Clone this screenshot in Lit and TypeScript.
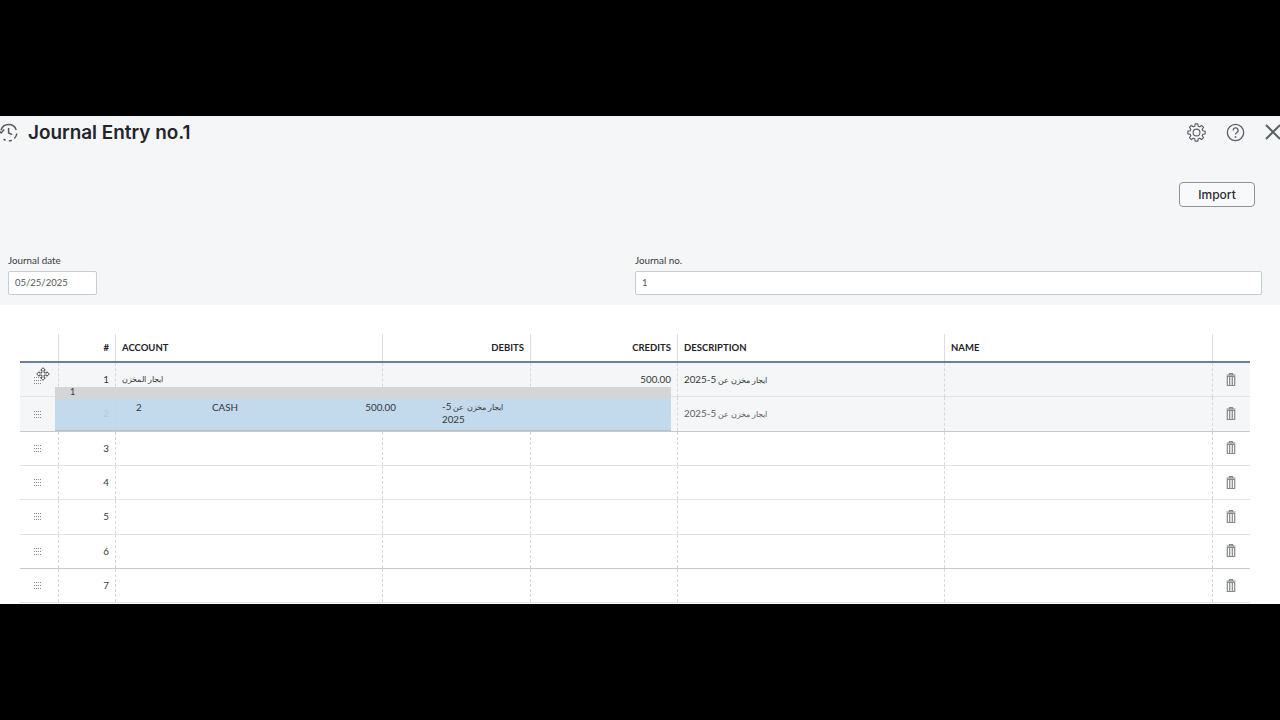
import { LitElement, html, css, svg } from "lit";
import { customElement } from "lit/decorators.js";

const FONT = css`Lato, "Noto Sans", "Liberation Sans", sans-serif`;
const ar = "ايجار مخزن عن ";
const descT = html`<span class="ar">${ar}</span>5-2025`;

const grip = svg`<svg class="grip" viewBox="0 0 8 7" width="8" height="7" shape-rendering="crispEdges" aria-hidden="true">
  ${[0, 2, 4, 6].map((c) => [0, 3, 6].map((r) => svg`<rect x="${c}" y="${r}" width="1" height="1" fill="#85898c"/>`))}
</svg>`;

const trash = html`<svg class="trash" viewBox="0 0 10 13" width="10" height="13" aria-hidden="true">
  <path d="M3.4 1.5V.6h3.2v.9M0.6 2h8.8" fill="none" stroke="#85898c" stroke-width="1.1"/>
  <path d="M1.3 3.4h7.4V12.6H1.3z M3.7 4v8 M6.3 4v8" fill="none" stroke="#85898c" stroke-width="1.2"/>
</svg>`;

function gearPath(): string {
  const pts: string[] = [];
  for (let i = 0; i < 8; i++) {
    const a = i * 45;
    for (const [r, d] of [[6.9, -15], [9.2, -9], [9.2, 9], [6.9, 15]] as const) {
      const t = ((a + d) * Math.PI) / 180;
      pts.push(`${(10 + r * Math.cos(t)).toFixed(2)} ${(10 + r * Math.sin(t)).toFixed(2)}`);
    }
  }
  return "M" + pts.join("L") + "Z";
}

interface Row { n: number; account?: string; credits?: string; desc?: boolean; tint?: boolean; soft?: boolean; }
const rows: Row[] = [
  { n: 1, account: "ايجار المخزن", credits: "500.00", desc: true, tint: true },
  { n: 2, desc: true, tint: true, soft: true },
  { n: 3 }, { n: 4 }, { n: 5 }, { n: 6 }, { n: 7 },
];

@customElement("app-root")
export class AppRoot extends LitElement {
  static styles = css`
    :host { display: block; width: 1280px; height: 720px; background: #000; padding: 116px 0; box-sizing: border-box; overflow: hidden; font-family: ${FONT}; color: #2b2d30; }
    .main { position: relative; height: 488px; background: #fff; overflow: hidden; }
    .head { height: 189px; background: #f4f6f8; display: flex; flex-direction: column; box-sizing: border-box; }
    .top { display: flex; align-items: center; height: 32px; }
    .hist { margin-left: -2px; width: 21px; height: 21px; flex: none; }
    h1 { margin: 0 0 0 9px; font-family: Inter, ${FONT}; font-size: 18.9px; font-weight: 600; color: #22252a; flex: 1; }
    .tools { display: flex; align-items: center; gap: 20px; margin-right: -1px; }
    .tools svg { display: block; flex: none; }
    .importrow { display: flex; justify-content: flex-end; padding-right: 25px; margin-top: 34px; }
    button { width: 76px; height: 25px; border: 1px solid #8f9498; border-radius: 4px; background: #f8f9fa; font: 500 12px Inter, ${FONT}; color: #2b2d30; padding: 0; }
    .fields { display: flex; margin-top: 48px; padding-left: 8px; }
    .field { display: flex; flex-direction: column; gap: 5px; width: 627px; }
    label { font-size: 9.8px; line-height: 11px; color: #393a3d; }
    .input { height: 24px; box-sizing: border-box; background: #fff; border: 1px solid #c9cdd0; border-radius: 2px; font-size: 9.5px; line-height: 22px; padding: 0 6px; color: #55585c; }
    .date .input { width: 89px; }
    .table { margin: 29px 30px 0 20px; width: 1230px; }
    .tr { display: grid; grid-template-columns: 38px 57px 267px 148px 147px 267px 268px 38px; }
    .hr { height: 27px; border-bottom: 2.5px solid #6d7f9b; }
    .hr .c { border-left: 1px solid #dcdee0; font-size: 9.5px; font-weight: 700; line-height: 27px; color: #1f2226; }
    .hr .c:first-child { border-left: 0; }
    .c { box-sizing: border-box; padding: 0 6px; min-width: 0; }
    .right { text-align: right; }
    .br { height: 34.33px; box-sizing: border-box; border-bottom: 1px solid #e1e3e5; }
    .br.tint { background: #f4f6f8; }
    .br.last { border-bottom-color: #c7cacc; }
    .br .c { border-left: 1px dashed #d6d8da; font-size: 9.8px; line-height: 33px; color: #33363a; white-space: nowrap; }
    .br .c:first-child { border-left: 0; }
    .br .c.g, .br .c.t { display: flex; align-items: center; justify-content: center; padding: 0; }
    .br .c.g { padding-right: 2px; }
    .br .c.t { padding: 0 1px 1px 0; }
    .br .c.acct { font-size: 8.1px; }
    .grip { display: block; }
    .ar { font-size: 8.3px; }
    .soft { color: #5c6064 !important; }
    .ghost { position: absolute; left: 55px; top: 271px; width: 616px; height: 44px; font-size: 9.8px; color: #34383c; overflow: hidden; border-bottom: 1px solid #b8c3cc; box-sizing: border-box; }
    .g1 { height: 12px; background: #d3d5d7; padding-left: 15px; line-height: 10px; font-size: 9px; }
    .g2 { height: 31px; background: rgba(190, 214, 234, 0.92); display: grid; grid-template-columns: 76px 92px 92px 1fr; line-height: 15px; padding: 1px 0 0 81px; box-sizing: border-box; }
    .g2 .a { text-align: right; }
    .g2 .d { width: 66px; margin-left: 46px; line-height: 12px; white-space: normal; }
    .cursor { position: absolute; left: 36px; top: 251px; }
  `;

  render() {
    return html`<div class="main">
      <section class="head">
        <div class="top">
          <svg class="hist" viewBox="0 0 21 21" aria-hidden="true">
            <path d="M3 8.2A8 8 0 0 1 18.2 8 M18.8 11.5a8 8 0 0 1-2.4 5 M13.8 18.2a8 8 0 0 1-3 .6 M7.6 18.2a8 8 0 0 1-1.9-1.1" fill="none" stroke="#55585c" stroke-width="1.5"/>
            <path d="M10.6 6v5l3.6 1.6" fill="none" stroke="#55585c" stroke-width="1.5"/>
            <path d="M0 7.6l3.2 3.4 3-3.4" fill="none" stroke="#55585c" stroke-width="1.5"/>
          </svg>
          <h1>Journal Entry no.1</h1>
          <div class="tools">
            <svg viewBox="0 0 20 20" width="19" height="19" aria-hidden="true">
              <path d="${gearPath()}" fill="none" stroke="#5c5f63" stroke-width="1.2" stroke-linejoin="round"/>
              <circle cx="10" cy="10" r="3.6" fill="none" stroke="#5c5f63" stroke-width="1.2"/>
            </svg>
            <svg viewBox="0 0 20 20" width="19" height="19" aria-hidden="true">
              <circle cx="10" cy="10" r="8.6" fill="none" stroke="#5c5f63" stroke-width="1.4"/>
              <path d="M7.5 7.8a2.6 2.6 0 1 1 3.9 2.2c-.9.6-1.4 1-1.4 2.2" fill="none" stroke="#5c5f63" stroke-width="1.4"/>
              <circle cx="10" cy="14.7" r=".95" fill="#5c5f63"/>
            </svg>
            <svg viewBox="0 0 16 16" width="16" height="16" aria-hidden="true">
              <path d="M1 1l14 14M15 1L1 15" fill="none" stroke="#5f6266" stroke-width="2"/>
            </svg>
          </div>
        </div>
        <div class="importrow"><button>Import</button></div>
        <div class="fields">
          <div class="field date"><label>Journal date</label><div class="input">05/25/2025</div></div>
          <div class="field"><label>Journal no.</label><div class="input">1</div></div>
        </div>
      </section>

      <div class="table">
        <div class="tr hr">
          <div class="c"></div>
          <div class="c right">#</div>
          <div class="c">ACCOUNT</div>
          <div class="c right">DEBITS</div>
          <div class="c right">CREDITS</div>
          <div class="c">DESCRIPTION</div>
          <div class="c">NAME</div>
          <div class="c"></div>
        </div>
        ${rows.map((r) => html`<div class="tr br ${r.tint ? "tint" : ""} ${r.n === 2 || r.n === 6 ? "last" : ""}">
          <div class="c g">${grip}</div>
          <div class="c right">${r.n}</div>
          <div class="c acct">${r.account ?? ""}</div>
          <div class="c right"></div>
          <div class="c right">${r.credits ?? ""}</div>
          <div class="c ${r.soft ? "soft" : ""}">${r.desc ? descT : ""}</div>
          <div class="c"></div>
          <div class="c t">${trash}</div>
        </div>`)}
      </div>

      <div class="ghost">
        <div class="g1">1</div>
        <div class="g2">
          <span>2</span>
          <span>CASH</span>
          <span class="a">500.00</span>
          <span class="d"><span class="ar">${ar}</span>5-<wbr>2025</span>
        </div>
      </div>

      <svg class="cursor" viewBox="0 0 16 16" width="14" height="14" aria-hidden="true">
        <path d="M8 .8l2.6 2.8H9.2v3.2h3.2V5.4L15.2 8l-2.8 2.6V9.2H9.2v3.2h1.4L8 15.2l-2.6-2.8h1.4V9.2H3.6v1.4L.8 8l2.8-2.6v1.4h3.2V3.6H5.4z" fill="#fff" stroke="#222" stroke-width=".9"/>
      </svg>
    </div>`;
  }
}
